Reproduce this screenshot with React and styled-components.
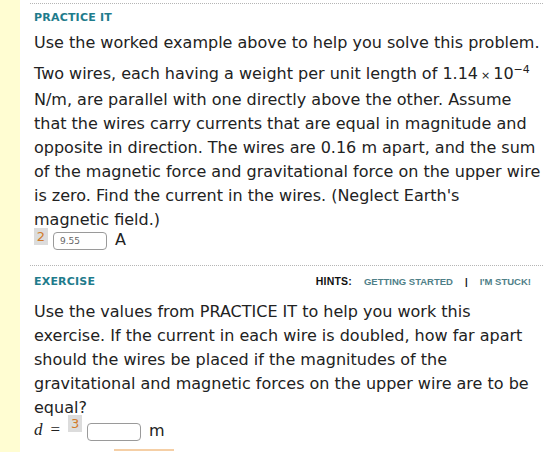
import styled, { createGlobalStyle } from 'styled-components';

const GlobalStyle = createGlobalStyle`
    html, body {
        margin: 0;
        padding: 0;
        background: #ffffff;
    }
    body {
        font-family: 'DejaVu Sans', Verdana, sans-serif;
        color: #222;
    }
`;

const colors = {
    teal: '#1f7c8c',
    hint: '#4f8088',
    strip: '#fffdd2',
    dots: '#b5b5b5',
    badge: '#dcdcdc',
    badgeText: '#d27a2a',
};

const Page = styled.div`
    display: flex;
    width: 560px;
    height: 452px;
    overflow: hidden;
`;
const Strip = styled.div`
    flex: 0 0 20px;
    background: ${colors.strip};
`;
const Content = styled.div`
    flex: 1;
    padding: 3px 17px 0 10px;
`;
const Section = styled.section`
    border-top: 1px dotted ${colors.dots};
    margin-top: ${(p) => p.$top || 0}px;
    padding: ${(p) => p.$pad || 7}px 0 0 4px;
`;
const HeadRow = styled.div`
    display: flex;
    align-items: baseline;
    justify-content: space-between;
`;
const Heading = styled.h3`
    margin: 0;
    font-size: 11px;
    line-height: 13px;
    font-weight: bold;
    color: ${colors.teal};
    letter-spacing: 0.2px;
`;
const Hints = styled.div`
    display: flex;
    align-items: baseline;
    gap: 12px;
    font-family: 'Liberation Sans', Arial, sans-serif;
    font-size: 9.5px;
    font-weight: bold;
    padding-right: 12px;
    color: #111;
`;
const HintLabel = styled.span`
    font-size: 10.5px;
    letter-spacing: 0.2px;
`;
const HintLink = styled.span`
    color: ${colors.hint};
`;
const Para = styled.p`
    margin: ${(p) => p.$top || 0}px 0 0;
    font-size: 16px;
    line-height: 24px;
`;
const Sup = styled.sup`
    font-size: 11px;
    line-height: 0;
`;
const Times = styled.span`
    font-size: 11px;
    margin: 0 3px;
`;
const AnswerRow = styled.div`
    display: flex;
    align-items: flex-end;
    margin-top: ${(p) => p.$top}px;
    height: ${(p) => p.$h}px;
    font-size: 16px;
`;
const Badge = styled.span`
    align-self: flex-start;
    width: 14px;
    height: 17px;
    background: ${colors.badge};
    color: ${colors.badgeText};
    font-size: 13px;
    text-align: center;
    line-height: 17px;
    margin-right: 5px;
`;
const Field = styled.span`
    box-sizing: border-box;
    width: 54px;
    height: 18px;
    border: 1px solid #9a9a9a;
    border-radius: 4px;
    font-size: 9px;
    color: #666;
    padding: 0 0 0 6px;
    line-height: 17px;
`;
const Unit = styled.span`
    margin-left: 8px;
    line-height: 20px;
`;
const MathVar = styled.span`
    font-family: 'Liberation Serif', 'Times New Roman', serif;
    font-style: italic;
    font-size: 17px;
    margin-right: 8px;
    line-height: 22px;
`;
const MathEq = styled.span`
    font-family: 'Liberation Serif', 'Times New Roman', serif;
    font-size: 17px;
    margin-right: 8px;
    line-height: 22px;
`;
const Tab = styled.div`
    width: 60px;
    height: 2px;
    margin: 8px 0 0 80px;
    background: #f5cfa6;
`;

export default function App() {
    return (
        <Page>
            <GlobalStyle />
            <Strip />
            <Content>
                <Section>
                    <Heading>PRACTICE IT</Heading>
                    <Para $top={7}>
                        Use the worked example above to help you solve this problem.
                    </Para>
                    <Para $top={7}>
                        Two wires, each having a weight per unit length of 1.14
                        <Times>×</Times>10<Sup>−4</Sup> N/m, are parallel with one directly above
                        the other. Assume that the wires carry currents that are equal in
                        magnitude and opposite in direction. The wires are 0.16 m apart, and
                        the sum of the magnetic force and gravitational force on the upper wire
                        is zero. Find the current in the wires. (Neglect Earth's<br />
                        magnetic field.)
                    </Para>
                    <AnswerRow $top={-4} $h={22}>
                        <Badge>2</Badge>
                        <Field>9.55</Field>
                        <Unit>A</Unit>
                    </AnswerRow>
                </Section>
                <Section $top={15} $pad={9}>
                    <HeadRow>
                        <Heading>EXERCISE</Heading>
                        <Hints>
                            <HintLabel>HINTS:</HintLabel>
                            <HintLink>GETTING STARTED</HintLink>
                            <span>|</span>
                            <HintLink>I'M STUCK!</HintLink>
                        </Hints>
                    </HeadRow>
                    <Para $top={12}>
                        Use the values from PRACTICE IT to help you work this exercise. If the
                        current in each wire is doubled, how far apart should the wires be
                        placed if the magnitudes of the gravitational and magnetic forces on
                        the upper wire are to be equal?
                    </Para>
                    <AnswerRow $top={-5} $h={26}>
                        <MathVar>d</MathVar>
                        <MathEq>=</MathEq>
                        <Badge>3</Badge>
                        <Field />
                        <Unit>m</Unit>
                    </AnswerRow>
                    <Tab />
                </Section>
            </Content>
        </Page>
    );
}
